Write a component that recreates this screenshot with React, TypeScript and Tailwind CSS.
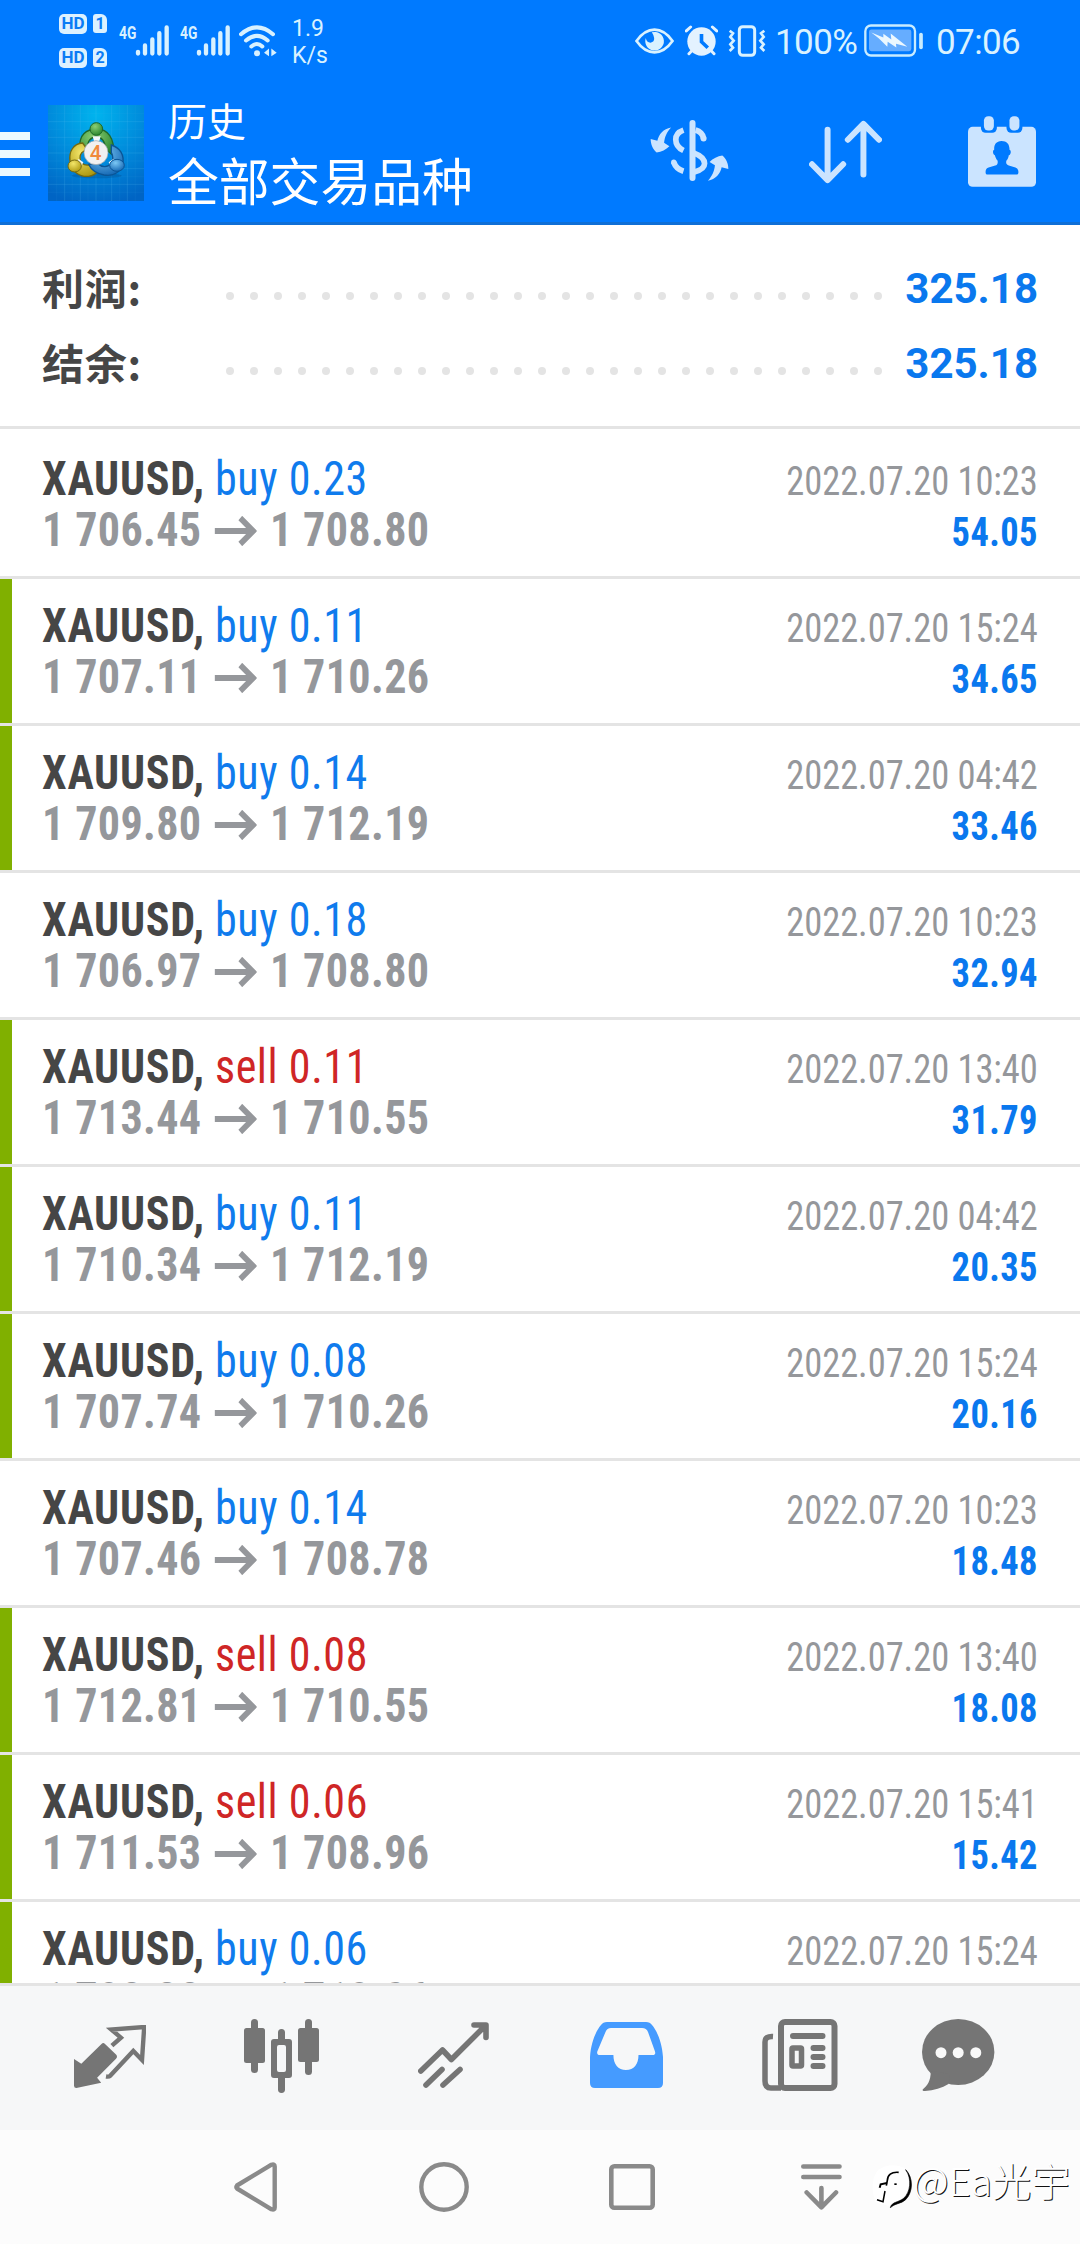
import React from "react";

interface Deal {
  type: "buy" | "sell";
  volume: string;
  open: string;
  close: string;
  date: string;
  profit: string;
  marked: boolean;
}

const deals: Deal[] = [
  { type: "buy", volume: "0.23", open: "1 706.45", close: "1 708.80", date: "2022.07.20 10:23", profit: "54.05", marked: false },
  { type: "buy", volume: "0.11", open: "1 707.11", close: "1 710.26", date: "2022.07.20 15:24", profit: "34.65", marked: true },
  { type: "buy", volume: "0.14", open: "1 709.80", close: "1 712.19", date: "2022.07.20 04:42", profit: "33.46", marked: true },
  { type: "buy", volume: "0.18", open: "1 706.97", close: "1 708.80", date: "2022.07.20 10:23", profit: "32.94", marked: false },
  { type: "sell", volume: "0.11", open: "1 713.44", close: "1 710.55", date: "2022.07.20 13:40", profit: "31.79", marked: true },
  { type: "buy", volume: "0.11", open: "1 710.34", close: "1 712.19", date: "2022.07.20 04:42", profit: "20.35", marked: true },
  { type: "buy", volume: "0.08", open: "1 707.74", close: "1 710.26", date: "2022.07.20 15:24", profit: "20.16", marked: true },
  { type: "buy", volume: "0.14", open: "1 707.46", close: "1 708.78", date: "2022.07.20 10:23", profit: "18.48", marked: false },
  { type: "sell", volume: "0.08", open: "1 712.81", close: "1 710.55", date: "2022.07.20 13:40", profit: "18.08", marked: true },
  { type: "sell", volume: "0.06", open: "1 711.53", close: "1 708.96", date: "2022.07.20 15:41", profit: "15.42", marked: true },
  { type: "buy", volume: "0.06", open: "1 708.38", close: "1 710.26", date: "2022.07.20 15:24", profit: "11.28", marked: true },
];

const HdBadge = ({ sim }: { sim: string }) => (
  <div className="flex items-center gap-[6px]">
    <span className="flex h-[20px] w-[28px] items-center justify-center rounded-[5px] bg-[#dcf1ff] text-[17px] leading-none font-bold text-[#0a7cf5]">
      HD
    </span>
    <span className="flex h-[19px] w-[14px] items-center justify-center rounded-[3px] rounded-tr-[6px] bg-[#dcf1ff] text-[16px] leading-none font-bold text-[#0a7cf5]">
      {sim}
    </span>
  </div>
);

const Signal = () => (
  <svg width="50" height="31" viewBox="0 0 150 92" className="shrink-0">
    <text x="0" y="42" fontSize="53" fontWeight="700" textLength="52" lengthAdjust="spacingAndGlyphs" fill="#d8f1ff" fontFamily="Roboto, sans-serif">4G</text>
    <g stroke="#d8f1ff" strokeWidth="13" strokeLinecap="round">
      <path d="M57 80V85M78 61V85M100 43V85M121 24V85M143 7V85" />
    </g>
  </svg>
);

const Wifi = () => (
  <svg width="38" height="32" viewBox="0 0 114 95" className="shrink-0" fill="none" stroke="#d8f1ff" strokeWidth="12" strokeLinecap="round">
    <path d="M6 27Q54-14 102 27M21 46Q54 18 86 46M37 64Q54 49 70 64" />
    <circle cx="54" cy="84" r="9" fill="#d8f1ff" stroke="none" />
    <path d="M75 83L90 70V93ZM97 70L113 83L97 93Z" fill="#d8f1ff" stroke="none" />
  </svg>
);

const StatusBar = () => (
  <div className="flex h-[81px] items-center pr-[58px] pl-[59px] text-[#d9f2ff]">
    <div className="flex shrink-0 flex-col gap-[14px]">
      <HdBadge sim="1" />
      <HdBadge sim="2" />
    </div>
    <div className="ml-[12px] flex gap-[11px]">
      <Signal />
      <Signal />
    </div>
    <div className="ml-[9px]">
      <Wifi />
    </div>
    <div className="ml-[15px] pt-[2px] text-[23px] leading-[27px]">
      <p>1.9</p>
      <p>K/s</p>
    </div>
    <div className="ml-auto flex shrink-0 items-center">
      <svg width="39" height="26" viewBox="0 0 116 78" className="-ml-px" fill="none">
        <path d="M4 39Q28 5 58 5Q88 5 112 39Q88 73 58 73Q28 73 4 39Z" stroke="#d9f2ff" strokeWidth="8" />
        <path d="M50 13A28 28 0 1 1 32 30Q34 44 46 44Q58 42 57 30Q56 22 50 13Z" fill="#d9f2ff" />
      </svg>
      <svg width="33" height="31" viewBox="0 0 100 92" className="ml-[11px]" fill="none">
        <circle cx="50" cy="49" r="43" fill="#e3f2ff" />
        <path d="M4 17L17 5M96 17L83 5M12 86L20 78M88 86L80 78" stroke="#e3f2ff" strokeWidth="9" strokeLinecap="round" />
        <path d="M50 26V50L69 68" stroke="#007aff" strokeWidth="11" />
      </svg>
      <svg width="38" height="32" viewBox="0 0 112 96" className="ml-[10px]" fill="none" stroke="#d9f2ff">
        <rect x="33" y="5" width="46" height="86" rx="10" strokeWidth="9" />
        <path d="M4 17L14 25L6 36L16 47L6 58L14 68L4 78M108 17L98 25L106 36L96 47L106 58L98 68L108 78" strokeWidth="8" />
      </svg>
      <span className="mt-[3px] ml-[9px] w-[91px] text-[35px] leading-none tracking-[-0.6px]">100%</span>
      <svg width="59" height="33" viewBox="0 0 177 98" className="-ml-[2px]" fill="none">
        <rect x="4" y="4" width="149" height="90" rx="17" stroke="#c9ecff" strokeWidth="7" />
        <rect x="15" y="16" width="127" height="65" rx="7" fill="#66adff" />
        <path d="M22 25L58 40V29L82 46L80 28L130 68L96 59L97 70L71 53L70 68L44 42Z" fill="#ecf8ff" />
        <path d="M171 31V70" stroke="#c9ecff" strokeWidth="11" strokeLinecap="round" />
      </svg>
      <span className="mt-[3px] ml-[13px] w-[86px] text-[35px] leading-none tracking-[-0.6px]">07:06</span>
    </div>
  </div>
);

const AppLogo = () => (
  <svg width="96" height="96" viewBox="0 0 288 288" className="mt-[3px] ml-[18px] shrink-0">
    <defs>
      <radialGradient id="bg" cx="0.5" cy="0.1" r="0.95">
        <stop offset="0" stopColor="#00b4ee" />
        <stop offset="0.5" stopColor="#008cdc" />
        <stop offset="1" stopColor="#0064c4" />
      </radialGradient>
      <radialGradient id="green" cx="0.4" cy="0.3" r="0.8">
        <stop offset="0" stopColor="#8ccf74" />
        <stop offset="1" stopColor="#1e7d27" />
      </radialGradient>
      <radialGradient id="yellow" cx="0.4" cy="0.3" r="0.8">
        <stop offset="0" stopColor="#f3e66a" />
        <stop offset="1" stopColor="#a89208" />
      </radialGradient>
      <radialGradient id="blue" cx="0.4" cy="0.3" r="0.8">
        <stop offset="0" stopColor="#7cc8f5" />
        <stop offset="1" stopColor="#0b5fae" />
      </radialGradient>
    </defs>
    <rect width="288" height="288" fill="url(#bg)" />
    <path d="M50 0V288M97 0V288M144 0V288M191 0V288M238 0V288M0 50H288M0 97H288M0 144H288M0 191H288M0 238H288" stroke="#5cc4f5" strokeOpacity="0.28" strokeWidth="2" />
    <path d="M26 0V288M73 0V288M120 0V288M168 0V288M215 0V288M262 0V288M0 26H288M0 73H288M0 120H288M0 168H288M0 215H288M0 262H288" stroke="#5cc4f5" strokeOpacity="0.1" strokeWidth="2" />
    <ellipse cx="146" cy="212" rx="75" ry="8" fill="#004a8c" opacity="0.35" />
    <g strokeWidth="4">
      <path d="M96 128C92 92 114 72 146 72C178 72 202 98 196 152L172 132C172 108 160 96 146 96C130 96 118 106 118 132Z" fill="url(#green)" stroke="#20692a" />
      <path d="M104 114C76 116 62 140 66 168C70 200 94 216 122 214C136 212 144 206 150 198L122 180C104 182 96 172 96 158C96 144 104 138 118 134Z" fill="url(#yellow)" stroke="#756a10" />
      <path d="M190 120C216 128 230 150 224 178C216 204 194 214 168 210C146 206 130 196 122 178L150 176C162 188 180 188 190 174C196 164 194 150 190 142Z" fill="url(#blue)" stroke="#0b5596" />
    </g>
    <path d="M134 94H158L154 108H138ZM92 162L106 172L96 192L84 170ZM196 162L182 172L190 190L202 170Z" fill="#f3f8fb" />
    <circle cx="145" cy="72" r="19" fill="url(#green)" stroke="#20692a" strokeWidth="3" />
    <ellipse cx="80" cy="183" rx="20" ry="18" fill="url(#yellow)" stroke="#756a10" strokeWidth="3" />
    <ellipse cx="207" cy="181" rx="22" ry="18" fill="url(#blue)" stroke="#0b5596" strokeWidth="3" />
    <circle cx="144" cy="143" r="36" fill="#f1f1f1" stroke="#9aa3a8" strokeWidth="2" />
    <text x="143" y="165" textAnchor="middle" fontSize="62" fontWeight="500" fill="#f08a3c" fontFamily="Roboto, sans-serif">4</text>
  </svg>
);

const Header = () => (
  <div className="flex h-[141px] items-center pr-[44px] text-white">
    <div className="mt-[4px] flex w-[30px] flex-col gap-[10px]">
      <span className="h-[8px] bg-[#ebf9ff]" />
      <span className="h-[8px] bg-[#ebf9ff]" />
      <span className="h-[8px] bg-[#ebf9ff]" />
    </div>
    <AppLogo />
    <div className="-mt-[3px] ml-[24px] font-['Noto_Sans_CJK_SC',sans-serif]">
      <p className="text-[39px] leading-[57px]">历史</p>
      <p className="text-[50.8px] leading-[62px]">全部交易品种</p>
    </div>
    <div className="ml-auto flex items-start text-[#cbe4ff]">
      <svg width="79" height="61" viewBox="0 0 236 182" className="mt-[4px]" fill="none" stroke="currentColor" strokeWidth="17">
        <path d="M127 9V173" strokeWidth="18" strokeLinecap="round" />
        <path d="M100 30Q77 38 77 58Q77 80 100 91" />
        <path d="M71 126Q78 146 100 153" />
        <circle cx="71" cy="126" r="8" fill="currentColor" stroke="none" />
        <path d="M136 30Q156 36 160 54" />
        <circle cx="160" cy="55" r="9" fill="currentColor" stroke="none" />
        <path d="M130 98Q163 110 163 130Q163 148 130 156" />
        <path d="M63 22C40 26 26 42 22 62L2 57C2 72 8 88 20 97C34 95 48 88 58 78L42 68C44 50 50 36 63 22Z" fill="currentColor" stroke="none" />
        <path d="M63 22C40 26 26 42 22 62L2 57C2 72 8 88 20 97C34 95 48 88 58 78L42 68C44 50 50 36 63 22Z" fill="currentColor" stroke="none" transform="rotate(180 118 101.5)" />
      </svg>
      <svg width="73" height="64" viewBox="0 0 220 190" className="mt-[4px] ml-[80px]" fill="none" stroke="currentColor" strokeWidth="18" strokeLinecap="round" strokeLinejoin="round">
        <path d="M56 28V179M9 132L56 180L103 132M164 163V12M117 58L164 10L211 58" />
      </svg>
      <svg width="68" height="71" viewBox="0 0 205 213" className="ml-[86px]" fill="none">
        <rect y="32" width="205" height="181" rx="14" fill="currentColor" />
        <rect x="39" y="-10" width="48" height="60" rx="14" fill="#007aff" />
        <rect x="116" y="-10" width="48" height="60" rx="14" fill="#007aff" />
        <rect x="48" y="0" width="30" height="43" rx="13" fill="currentColor" />
        <rect x="125" y="0" width="30" height="43" rx="13" fill="currentColor" />
        <path d="M101 75C84 75 78 88 79 101C73 102 75 117 81 118C83 126 86 131 89 134C91 142 88 147 82 149L62 155C54 158 53 163 53 169C53 174 55 176 59 176H146C150 176 152 174 152 169C152 163 150 158 143 155L123 149C117 147 113 142 116 134C119 131 122 126 123 118C130 117 131 102 125 101C126 86 118 75 101 75Z" fill="#007aff" />
      </svg>
    </div>
  </div>
);

const SummaryRow = ({ label, value }: { label: string; value: string }) => (
  <div className="flex h-[75px] items-center">
    <span className="-mt-[4px] w-[184px] font-['Noto_Sans_CJK_SC',sans-serif] text-[42px] leading-none font-bold tracking-[0.8px] text-[#464646]">{label}</span>
    <span className="mt-[15px] flex gap-[16px]">
      {Array.from({ length: 28 }, (_, i) => (
        <span key={i} className="size-[8px] rounded-full bg-[#e4e4e4]" />
      ))}
    </span>
    <span className="ml-auto text-[42px] leading-none font-bold text-[#0a78ee]">{value}</span>
  </div>
);

const DealRow = ({ type, volume, open, close, date, profit, marked }: Deal) => (
  <div className="flex h-[147px] shrink-0 border-b-[3px] border-[#e4e4e4] font-['Roboto_Condensed',Roboto,sans-serif] leading-[51px]">
    <span className={marked ? "w-[12px] bg-[#80b000]" : "w-[12px]"} />
    <div className="flex grow justify-between pt-[21px] pr-[42px] pl-[30px]">
      <div className="origin-left scale-x-[0.918] text-[48px]">
        <p>
          <span className="font-bold tracking-[0.8px] text-[#464646]">XAUUSD,</span>{" "}
          <span className={type === "buy" ? "tracking-[0.6px] text-[#0f7bed]" : "tracking-[0.6px] text-[#cf2626]"}>
            {type} {volume}
          </span>
        </p>
        <p className="flex items-center font-bold tracking-[0.4px] text-[#95979b]">
          {open}
          <svg width="46" height="30" viewBox="0 0 46 30" className="mt-[2px] mr-[14.5px] ml-[14px]" fill="none" stroke="currentColor" strokeWidth="6">
            <path d="M0 15H41M28 2L42 15L28 28" />
          </svg>
          {close}
        </p>
      </div>
      <div className="mt-[3px] origin-right scale-x-[0.912] text-right text-[40px]">
        <p className="tracking-[-0.05px] text-[#95979b]">{date}</p>
        <p className="font-bold tracking-[0.4px] text-[#0a78ee]">{profit}</p>
      </div>
    </div>
  </div>
);

const TabBar = () => (
  <div className="flex h-[147px] items-start border-t-[3px] border-[#e4e4e4] bg-[#f6f7f8] pt-[33px] pl-[74px] text-[#757575]">
    <svg width="72" height="63" viewBox="0 0 72 63" className="mt-[6px]" fill="none">
      <path d="M0 34L7.3 38.7L27.5 19Q29.3 17 31 19L42 29.5Q44 31.7 42 33.7L23.1 52.7L27.2 57.7L2.4 63Q0 63 0 60.7Z" fill="currentColor" />
      <path d="M37.9 20.7L46.9 12.7L37.3 4.5L70.2 2L68 35L59.3 26L36 51Q35 52 32 51.5" stroke="currentColor" strokeWidth="4.4" />
    </svg>
    <svg width="75" height="74" viewBox="0 0 75 74" className="ml-[98px]" fill="currentColor">
      <rect x="0" y="9" width="21" height="35" rx="2.5" />
      <rect x="7" y="0" width="7" height="54" rx="3.5" />
      <path d="M30 20H34V13.5A3.5 3.5 0 0 1 41 13.5V20H45Q48 20 48 23V56Q48 59 45 59H41V70.5A3.5 3.5 0 0 1 34 70.5V59H30Q27 59 27 56V23Q27 20 30 20ZM35 26Q33 26 33 28V51Q33 53 35 53H40Q42 53 42 51V28Q42 26 40 26Z" fillRule="evenodd" />
      <rect x="54" y="9" width="21" height="34" rx="2.5" />
      <rect x="61" y="0" width="7" height="56" rx="3.5" />
    </svg>
    <svg width="71" height="66" viewBox="0 0 71 66" className="mt-[3px] ml-[99px]" fill="none" stroke="currentColor" strokeWidth="5.6" strokeLinecap="round" strokeLinejoin="round">
      <path d="M2.8 49L24.5 28L33.4 37.5L67 4M56 3H68V15.5M8 63L24 47.5M25 63L42 47.5" />
    </svg>
    <svg width="73" height="66" viewBox="0 0 73 66" className="mt-[3px] ml-[101px]" fill="#459bff">
      <path d="M0 35C1 20 6 9 11 3Q13 0 17 0H56Q60 0 62 3C67 9 72 20 73 35V61Q73 66 68 66H5Q0 66 0 61ZM21 6Q17 6 15.5 10L7.3 29.5Q6.5 33 10 33H23.4C23.4 42 28 48 36 48C44 48 48.5 42 48.5 33H62.5Q66 33 65 29.5L58 10Q56.5 6 52 6Z" fillRule="evenodd" />
    </svg>
    <svg width="76" height="72" viewBox="0 0 76 72" className="ml-[99px]" fill="none" stroke="currentColor" strokeWidth="6">
      <rect x="19" y="3" width="53.5" height="66" rx="4" />
      <path d="M11 17.5Q3 17 3 23V62Q3 69 9 69H19" strokeWidth="5.5" />
      <path d="M31 17H60.5M51.5 29H60.5M51.5 38H60.5M51.5 47H60.5" strokeLinecap="round" />
      <rect x="30" y="29" width="9.5" height="18" rx="1" strokeWidth="5.5" />
    </svg>
    <svg width="73" height="72" viewBox="0 0 73 72" className="ml-[84px]" fill="currentColor">
      <ellipse cx="36.2" cy="33" rx="36.2" ry="33" />
      <path d="M8.7 52C9 62 5 67 .7 70.5C.4 72 1 72 3 72C12 71.5 20 69 26.5 65L28 55Z" />
      <g fill="#f9f9f9">
        <circle cx="19" cy="33.7" r="5.5" />
        <circle cx="36.2" cy="33.7" r="5.5" />
        <circle cx="53.8" cy="33.7" r="5.5" />
      </g>
    </svg>
  </div>
);

const SystemNav = () => (
  <div className="flex h-[114px] items-center bg-[#fcfcfc] pl-[234px]">
    <svg width="43" height="50" viewBox="0 0 43 50" fill="none" stroke="#8a8a8a" strokeWidth="4.4" strokeLinejoin="round">
      <path d="M3 23.5L37.5 2.7Q40.7 1.5 40.7 4.5V45.5Q40.7 48.5 37.5 47.3L3 26.5Q1.8 25 3 23.5Z" />
    </svg>
    <svg width="50" height="50" viewBox="0 0 50 50" className="ml-[142px]" fill="none" stroke="#8a8a8a" strokeWidth="4.4">
      <circle cx="25" cy="25" r="22.7" />
    </svg>
    <svg width="46" height="46" viewBox="0 0 46 46" className="ml-[140px]" fill="none" stroke="#8a8a8a" strokeWidth="4.6">
      <rect x="2.3" y="2.3" width="41.4" height="41.4" rx="3" />
    </svg>
    <svg width="41" height="46" viewBox="0 0 41 46" className="ml-[146px]" fill="none" stroke="#8a8a8a" strokeWidth="4.6" strokeLinecap="round" strokeLinejoin="round">
      <path d="M2.3 2.5H38.5M2.3 13H38.5M20.4 24V43M5.7 28.5L20.4 43.3L35 28.5" />
    </svg>
    <svg width="42" height="46" viewBox="0 0 126 138" className="-mt-[2px] ml-[29px]" fill="none">
      <path d="M22 20Q62-4 102 16Q122 60 108 100Q90 130 56 130L14 118Q-8 58 22 20Z" fill="#fff" />
      <path d="M83 28C60 26 50 36 49 52L46 68" stroke="#000" strokeWidth="5" />
      <path d="M26 74L29 64L48 60" stroke="#000" strokeWidth="6" />
      <path d="M42 84L36 116L18 110" stroke="#000" strokeWidth="4.5" />
      <rect x="70" y="61" width="7" height="5" fill="#000" />
      <path d="M104 20C124 48 118 88 98 106C84 118 62 116 58 134C68 122 92 122 104 110C126 88 128 44 104 20Z" fill="#000" stroke="#000" strokeWidth="2" />
    </svg>
    <span className="-mt-[15px] font-['Noto_Sans_CJK_SC',sans-serif] text-[39px] leading-none font-light whitespace-nowrap text-white [text-shadow:1px_1px_0_#111]">
      @Ea光宇
    </span>
  </div>
);

const App = () => {
  return (
    <div className="flex h-[2244px] w-[1080px] flex-col overflow-hidden bg-white font-[Roboto,'Noto_Sans_CJK_SC',sans-serif]">
      <div className="h-[225px] shrink-0 border-b-[3px] border-[#0f6fd6] bg-[#007aff]">
        <StatusBar />
        <Header />
      </div>
      <div className="h-[204px] shrink-0 border-b-[3px] border-[#e4e4e4] pt-[26px] pr-[42px] pl-[42px]">
        <SummaryRow label="利润:" value="325.18" />
        <SummaryRow label="结余:" value="325.18" />
      </div>
      <div className="flex h-[1554px] shrink-0 flex-col overflow-hidden pt-[3px]">
        {deals.map((deal, i) => (
          <DealRow key={i} {...deal} />
        ))}
      </div>
      <TabBar />
      <SystemNav />
    </div>
  );
};

export default App;
